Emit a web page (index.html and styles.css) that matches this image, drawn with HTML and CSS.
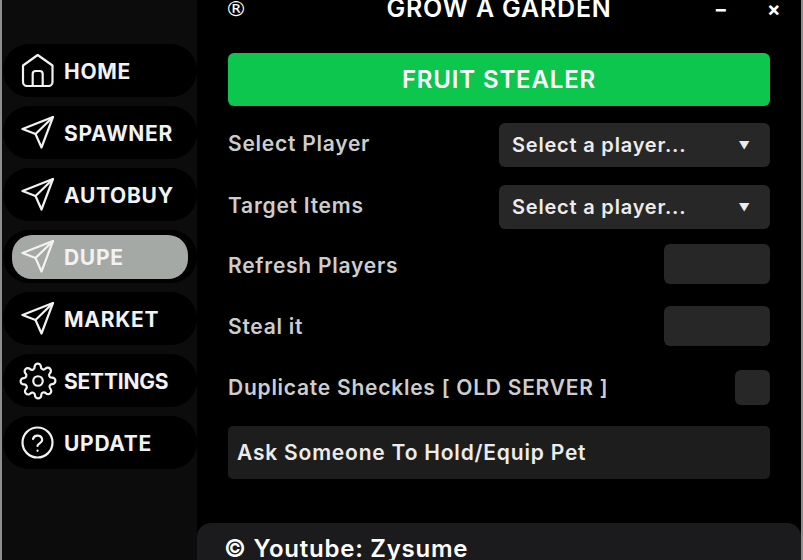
FILE: index.html
```html
<!DOCTYPE html>
<html lang="en">
<head>
  <meta charset="UTF-8" />
  <title>GROW A GARDEN</title>
  <link rel="stylesheet" href="styles.css">
</head>
<body>
  <div class="window">
    <div class="sidebar">
      <div class="nav-item">
        <svg class="nav-icon" viewBox="0 0 33 33"><path d="M2 11.500 16.700 1 31.500 11.500V28a4 4 0 0 1-4 4H6a4 4 0 0 1-4-4Z"/><path d="M11.700 32V20a3 3 0 0 1 3-3h4a3 3 0 0 1 3 3V32"/></svg>
        <span>HOME</span>
      </div>
      <div class="nav-item">
        <svg class="nav-icon" viewBox="0 0 33 33"><path d="M32 1 1.500 13 14.500 18 20.500 31.500Z"/><path d="M32 1 14.500 18"/></svg>
        <span>SPAWNER</span>
      </div>
      <div class="nav-item">
        <svg class="nav-icon" viewBox="0 0 33 33"><path d="M32 1 1.500 13 14.500 18 20.500 31.500Z"/><path d="M32 1 14.500 18"/></svg>
        <span>AUTOBUY</span>
      </div>
      <div class="nav-item active">
        <div class="nav-pill">
          <svg class="nav-icon" viewBox="0 0 33 33"><path d="M32 1 1.500 13 14.500 18 20.500 31.500Z"/><path d="M32 1 14.500 18"/></svg>
          <span>DUPE</span>
        </div>
      </div>
      <div class="nav-item">
        <svg class="nav-icon" viewBox="0 0 33 33"><path d="M32 1 1.500 13 14.500 18 20.500 31.500Z"/><path d="M32 1 14.500 18"/></svg>
        <span>MARKET</span>
      </div>
      <div class="nav-item">
        <svg class="nav-icon gear" viewBox="0 0 24 24"><circle cx="12" cy="12" r="3"/><path d="M19.400 15a1.650 1.650 0 0 0 .33 1.820l.06.06a2 2 0 1 1-2.830 2.830l-.06-.06a1.650 1.650 0 0 0-2.820 1.170V21a2 2 0 1 1-4 0v-.09a1.650 1.650 0 0 0-2.820-1.110l-.06.06a2 2 0 1 1-2.830-2.830l.06-.06a1.650 1.650 0 0 0-1.170-2.820H3a2 2 0 1 1 0-4h.09A1.650 1.650 0 0 0 4.200 7.330l-.06-.06a2 2 0 1 1 2.830-2.830l.06.06a1.650 1.650 0 0 0 2.820-1.170V3a2 2 0 1 1 4 0v.09a1.650 1.650 0 0 0 2.820 1.170l.06-.06a2 2 0 1 1 2.830 2.830l-.06.06a1.650 1.650 0 0 0 1.170 2.820H21a2 2 0 1 1 0 4h-.09a1.650 1.650 0 0 0-1.510 1Z"/></svg>
        <span class="tight">SETTINGS</span>
      </div>
      <div class="nav-item">
        <svg class="nav-icon" viewBox="0 0 33 33"><circle cx="16.500" cy="16.500" r="15"/><path d="M12 13a4.700 4.700 0 0 1 9.200 1c0 3-4.700 3.500-4.700 6"/><path d="M16.500 24.500v.3"/></svg>
        <span>UPDATE</span>
      </div>
    </div>

    <div class="main">
      <div class="titlebar">
        <span class="reg">®</span>
        <span class="title">GROW A GARDEN</span>
        <span class="win-btn minimize">−</span>
        <span class="win-btn close">×</span>
      </div>

      <div class="content">
        <div class="banner">FRUIT STEALER</div>

        <div class="row row-select">
          <span class="label">Select Player</span>
          <div class="dropdown"><span>Select a player...</span><span class="arrow">▼</span></div>
        </div>
        <div class="row row-select">
          <span class="label">Target Items</span>
          <div class="dropdown"><span>Select a player...</span><span class="arrow">▼</span></div>
        </div>
        <div class="row row-button">
          <span class="label">Refresh Players</span>
          <div class="small-btn"></div>
        </div>
        <div class="row row-button">
          <span class="label">Steal it</span>
          <div class="small-btn"></div>
        </div>
        <div class="row row-check">
          <span class="label">Duplicate Sheckles [ OLD SERVER ]</span>
          <div class="checkbox"></div>
        </div>
        <div class="notice">Ask Someone To Hold/Equip Pet</div>
      </div>

      <div class="footer">© Youtube: Zysume</div>
    </div>
  </div>
</body>
</html>
```

FILE: styles.css
```css
html, body {
  margin: 0;
  height: 100%;
  overflow: hidden;
  background: #000;
}
body {
  font-family: Inter, "Open Sans", sans-serif;
  color: #fff;
}
.window {
  display: flex;
  width: 803px;
  height: 560px;
  box-sizing: border-box;
  border-left: 2px solid #8f8f8f;
  border-right: 2px solid #8f8f8f;
  overflow: hidden;
}
.sidebar {
  width: 195px;
  flex-shrink: 0;
  box-sizing: border-box;
  padding: 44px 0 0 1px;
  background: #0c0c0c;
  display: flex;
  flex-direction: column;
  gap: 9px;
}
.nav-item {
  height: 53px;
  border-radius: 26px;
  background: #000;
  display: flex;
  align-items: center;
  padding-left: 18px;
  box-sizing: border-box;
  font-size: 21px;
  font-weight: 700;
  letter-spacing: 0.7px;
  color: #f2f2f2;
}
.nav-item span {
  margin-left: 10px;
  padding-top: 2px;
}
.nav-item .tight {
  letter-spacing: -0.2px;
}
.nav-icon {
  width: 33px;
  height: 33px;
  flex-shrink: 0;
  fill: none;
  stroke: #f2f2f2;
  stroke-width: 2.2;
  stroke-linejoin: round;
  stroke-linecap: round;
}
.nav-icon.gear {
  width: 38px;
  height: 38px;
  margin: 0 -2.500px;
  stroke-width: 1.400;
}
.nav-item.active {
  padding: 0 9px;
}
.nav-pill {
  flex: 1;
  height: 44px;
  border-radius: 20px;
  background: #a5a9a5;
  display: flex;
  align-items: center;
  padding-left: 9px;
}
.main {
  flex: 1;
  display: flex;
  flex-direction: column;
  position: relative;
}
.titlebar {
  height: 53px;
  position: relative;
}
.reg {
  position: absolute;
  left: 28px;
  top: -4px;
  font-family: "DejaVu Sans", sans-serif;
  font-size: 22px;
}
.title {
  position: absolute;
  left: 0;
  right: 0;
  top: -7px;
  text-align: center;
  font-size: 25px;
  font-weight: 600;
  letter-spacing: 0.8px;
}
.win-btn {
  position: absolute;
  top: -3px;
  font-size: 20px;
  font-weight: 700;
}
.minimize { left: 517px; }
.close { left: 570px; }
.content {
  padding: 0 31px;
  display: flex;
  flex-direction: column;
}
.banner {
  height: 53px;
  border-radius: 6px;
  background: #0dc64e;
  display: flex;
  align-items: center;
  justify-content: center;
  font-size: 24px;
  font-weight: 600;
  letter-spacing: 0.85px;
}
.row {
  display: flex;
  align-items: center;
  justify-content: space-between;
}
.row-select { height: 44px; margin-top: 17px; }
.row-select + .row-select { margin-top: 18px; }
.row-select .label { margin-top: -3px; }
.row-button { height: 40px; margin-top: 22px; }
.row-select + .row-button { margin-top: 15px; }
.row-select + .row-button .label { margin-top: 2px; }
.row-check { height: 35px; margin-top: 24px; }
.label {
  font-size: 21px;
  font-weight: 600;
  letter-spacing: 0.75px;
  color: #cdcdcd;
}
.dropdown {
  width: 271px;
  height: 44px;
  box-sizing: border-box;
  border-radius: 6px;
  background: #272727;
  display: flex;
  align-items: center;
  justify-content: space-between;
  padding: 0 20px 0 13px;
  font-size: 20px;
  font-weight: 600;
  letter-spacing: 0.8px;
  color: #ececec;
}
.arrow {
  font-size: 11px;
  letter-spacing: 0;
}
.small-btn {
  width: 106px;
  height: 40px;
  border-radius: 6px;
  background: #272727;
}
.checkbox {
  width: 35px;
  height: 35px;
  border-radius: 6px;
  background: #272727;
}
.notice {
  height: 53px;
  margin-top: 21px;
  border-radius: 5px;
  background: #1d1d1d;
  display: flex;
  align-items: center;
  padding-left: 9px;
  font-size: 21px;
  font-weight: 600;
  letter-spacing: 0.8px;
  color: #ececec;
}
.footer {
  position: absolute;
  left: 0;
  right: 0;
  top: 523px;
  height: 60px;
  box-sizing: border-box;
  border-radius: 14px;
  background: #1b1b1e;
  padding: 11px 0 0 27px;
  font-size: 24px;
  font-weight: 600;
  letter-spacing: 0.75px;
}
```
